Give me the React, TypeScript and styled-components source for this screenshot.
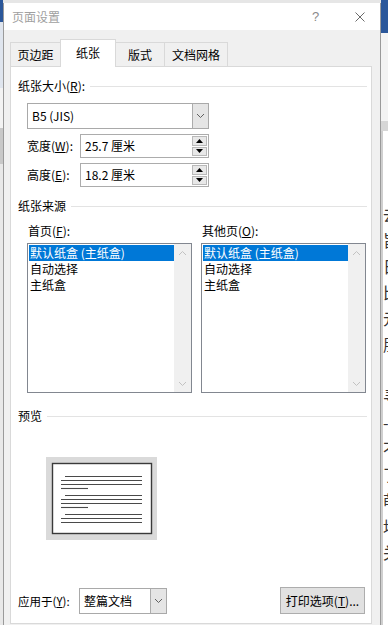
import React from "react";
import styled, { createGlobalStyle } from "styled-components";

const Global = createGlobalStyle`
  html, body { margin: 0; padding: 0; overflow: hidden; background: #ffffff; }
  body {
    font-family: "Noto Sans CJK SC", "Microsoft YaHei", "Noto Sans", sans-serif;
    font-size: 12px;
    color: #000;
  }
  * { box-sizing: border-box; }
`;

const Screen = styled.div`
  width: 388px;
  height: 625px;
  display: flex;
  overflow: hidden;
  background: #e6e6e6;
`;

const LeftStrip = styled.div`
  width: 3px;
  display: flex;
  flex-direction: column;
  flex-shrink: 0;
`;

const StripBlock = styled.div<{ $h?: number; $bg: string }>`
  height: ${(p) => (p.$h ? `${p.$h}px` : "auto")};
  flex: ${(p) => (p.$h ? "none" : "1")};
  background: ${(p) => p.$bg};
`;

const RightStrip = styled.div`
  width: 7px;
  display: flex;
  flex-direction: column;
  flex-shrink: 0;
  overflow: hidden;
`;

const DocArea = styled.div`
  flex: 1;
  background: #ffffff;
  border-left: 2px solid #cfcfcf;
  padding-top: 70px;
  overflow: hidden;
`;

const DocChar = styled.div`
  font-size: 16px;
  line-height: 26px;
  color: #333;
  white-space: nowrap;
`;

const Dialog = styled.div`
  width: 378px;
  height: 622px;
  margin-top: 3px;
  flex-shrink: 0;
  background: #f0f0f0;
  border-left: 1px solid #9a9a9a;
  border-right: 1px solid #9a9a9a;
  display: flex;
  flex-direction: column;
`;

const TitleBar = styled.div`
  height: 27px;
  background: #ffffff;
  display: flex;
  align-items: center;
  padding-left: 8px;
  flex-shrink: 0;
`;

const TitleText = styled.span`
  color: #a0a0a0;
  font-size: 12px;
  line-height: 16px;
`;

const HelpMark = styled.span`
  margin-left: auto;
  width: 10px;
  color: #8a8a8a;
  font-family: "Liberation Sans", sans-serif;
  font-size: 13px;
  line-height: 16px;
`;

const CloseBox = styled.span`
  margin-left: 33px;
  margin-right: 15px;
  width: 10px;
  height: 10px;
  display: flex;
`;

const Body = styled.div`
  flex: 1;
  display: flex;
  flex-direction: column;
  padding: 9px 8px 0 6px;
`;

const TabStrip = styled.div`
  height: 27px;
  display: flex;
  align-items: flex-start;
  position: relative;
  z-index: 2;
`;

const Tab = styled.div<{ $w: number; $active?: boolean }>`
  width: ${(p) => p.$w}px;
  height: ${(p) => (p.$active ? 28 : 24)}px;
  margin-top: ${(p) => (p.$active ? 0 : 3)}px;
  margin-right: -1px;
  background: ${(p) => (p.$active ? "#ffffff" : "#f0f0f0")};
  border: 1px solid #d9d9d9;
  border-bottom: none;
  position: relative;
  z-index: ${(p) => (p.$active ? 2 : 1)};
  display: flex;
  align-items: center;
  justify-content: center;
  font-size: 12px;
  line-height: 16px;
  padding-bottom: ${(p) => (p.$active ? 2 : 0)}px;
`;

const Panel = styled.div`
  height: 558px;
  background: #ffffff;
  border: 1px solid #d9d9d9;
  padding: 11px 4px 9px 7px;
  display: flex;
  flex-direction: column;
`;

const SectionHeader = styled.div<{ $mt?: number }>`
  height: 16px;
  margin-top: ${(p) => p.$mt ?? 0}px;
  display: flex;
  align-items: center;
  line-height: 16px;
  white-space: nowrap;
`;

const SectionLine = styled.div`
  flex: 1;
  height: 1px;
  background: #e3e3e3;
  margin-left: 5px;
`;

const Key = styled.span`
  text-decoration: underline;
  text-underline-offset: 1px;
`;

const Combo = styled.div<{ $w: number; $mt?: number; $ml?: number }>`
  width: ${(p) => p.$w}px;
  height: 26px;
  margin-top: ${(p) => p.$mt ?? 0}px;
  margin-left: ${(p) => p.$ml ?? 0}px;
  border: 1px solid #a9a9a9;
  background: #ffffff;
  display: flex;
  align-items: stretch;
  flex-shrink: 0;
`;

const ComboText = styled.div`
  flex: 1;
  display: flex;
  align-items: center;
  padding-left: 4px;
  line-height: 16px;
  white-space: nowrap;
`;

const ComboButton = styled.div`
  width: 16px;
  background: #e5e5e5;
  border-left: 1px solid #acacac;
  display: flex;
  align-items: center;
  justify-content: center;
`;

const FieldRow = styled.div<{ $mt?: number }>`
  height: 24px;
  margin-top: ${(p) => p.$mt ?? 0}px;
  margin-left: 9px;
  display: flex;
  align-items: center;
`;

const FieldLabel = styled.div`
  width: 53px;
  line-height: 16px;
  white-space: nowrap;
`;

const Spin = styled.div`
  width: 129px;
  height: 24px;
  border: 1px solid #acacac;
  background: #ffffff;
  display: flex;
  align-items: stretch;
`;

const SpinText = styled.div`
  flex: 1;
  display: flex;
  align-items: center;
  padding-left: 4px;
  line-height: 16px;
`;

const SpinButtons = styled.div`
  width: 16px;
  padding: 1px 1px 1px 0;
  display: flex;
  flex-direction: column;
  gap: 1px;
`;

const SpinBtn = styled.div`
  flex: 1;
  background: #e8e8e8;
  border: 1px solid #b9b9b9;
  display: flex;
  align-items: center;
  justify-content: center;
`;

const Columns = styled.div`
  margin-top: 9px;
  margin-left: 9px;
  display: grid;
  grid-template-columns: 165px 165px;
  column-gap: 9px;
`;

const Column = styled.div`
  display: flex;
  flex-direction: column;
`;

const ColLabel = styled.div`
  height: 16px;
  line-height: 16px;
  padding-left: 1px;
`;

const ListBox = styled.div`
  margin-top: 4px;
  height: 150px;
  border: 1px solid #828790;
  background: #ffffff;
  display: flex;
  padding: 1px 0 0 1px;
`;

const ListItems = styled.div`
  flex: 1;
  display: flex;
  flex-direction: column;
`;

const ListItem = styled.div<{ $selected?: boolean }>`
  height: 16px;
  line-height: 16px;
  padding-left: 1px;
  white-space: nowrap;
  background: ${(p) => (p.$selected ? "#0078d7" : "transparent")};
  color: ${(p) => (p.$selected ? "#ffffff" : "#000000")};
`;

const ScrollBar = styled.div`
  width: 17px;
  margin-top: -1px;
  background: #f0f0f0;
  display: flex;
  flex-direction: column;
  justify-content: space-between;
  align-items: center;
  padding: 6px 0 5px;
`;

const PreviewBox = styled.div`
  margin-top: 33px;
  margin-left: 28px;
  width: 111px;
  height: 83px;
  flex-shrink: 0;
`;

const BottomRow = styled.div`
  margin-top: auto;
  height: 27px;
  display: flex;
  align-items: center;
`;

const BottomLabel = styled.div`
  width: 61px;
  line-height: 16px;
  white-space: nowrap;
  font-size: 11.5px;
`;

const PushButton = styled.div`
  margin-left: auto;
  margin-right: 2px;
  width: 85px;
  height: 27px;
  background: #e1e1e1;
  border: 1px solid #adadad;
  display: flex;
  align-items: center;
  justify-content: center;
  line-height: 16px;
  white-space: nowrap;
`;

const Chevron = ({ dir = "down", color = "#606060" }: { dir?: "down" | "up"; color?: string }) => (
  <svg width="9" height="6" viewBox="0 0 9 6">
    <polyline
      points={dir === "down" ? "1,1 4.5,4.5 8,1" : "1,5 4.5,1.5 8,5"}
      fill="none"
      stroke={color}
      strokeWidth="1"
    />
  </svg>
);

const Tri = ({ up }: { up?: boolean }) => (
  <svg width="7" height="4" viewBox="0 0 7 4">
    <polygon points={up ? "0,4 3.5,0 7,4" : "0,0 7,0 3.5,4"} fill="#000" />
  </svg>
);

const CloseIcon = () => (
  <svg width="10" height="10" viewBox="0 0 10 10">
    <line x1="0.5" y1="0.5" x2="9.5" y2="9.5" stroke="#6a6a6a" strokeWidth="1" />
    <line x1="9.5" y1="0.5" x2="0.5" y2="9.5" stroke="#6a6a6a" strokeWidth="1" />
  </svg>
);

const PagePreview = () => {
  const lines: Array<[number, number, number]> = [
    [19, 96, 19], [15, 96, 23], [15, 96, 27], [15, 42, 31],
    [19, 96, 38], [15, 96, 42], [15, 96, 46], [15, 42, 50],
    [19, 96, 57], [15, 96, 61], [15, 96, 65],
  ];
  return (
    <svg width="111" height="83" viewBox="0 0 111 83">
      <rect x="0" y="0" width="111" height="83" fill="#dadada" />
      <rect x="6.5" y="6.5" width="99" height="70" fill="#ffffff" stroke="#3a3a3a" strokeWidth="1.4" />
      {lines.map(([x1, x2, y], i) => (
        <line key={i} x1={x1} x2={x2} y1={y + 0.5} y2={y + 0.5} stroke="#4a4a4a" strokeWidth="1.1" />
      ))}
    </svg>
  );
};

const trays = ["默认纸盒 (主纸盒)", "自动选择", "主纸盒"];

const TrayList = () => (
  <ListBox>
    <ListItems>
      {trays.map((t, i) => (
        <ListItem key={t} $selected={i === 0}>
          {t}
        </ListItem>
      ))}
    </ListItems>
    <ScrollBar>
      <Chevron dir="up" color="#c2c2c2" />
      <Chevron dir="down" color="#c2c2c2" />
    </ScrollBar>
  </ListBox>
);

const docChars = ["去", "旨", "日", "比", "元", "朋", "", "寻", "-", "不", "了", "萌", "均", "关"];

export default function App() {
  return (
    <>
      <Global />
      <Screen>
        <LeftStrip>
          <StripBlock $h={22} $bg="#2b579a" />
          <StripBlock $h={66} $bg="#dfe5ee" />
          <StripBlock $h={40} $bg="#f3f3f3" />
          <StripBlock $h={36} $bg="#c8c8c8" />
          <StripBlock $bg="#e8e8e8" />
        </LeftStrip>

        <Dialog>
          <TitleBar>
            <TitleText>页面设置</TitleText>
            <HelpMark>?</HelpMark>
            <CloseBox>
              <CloseIcon />
            </CloseBox>
          </TitleBar>

          <Body>
            <TabStrip>
              <Tab $w={51}>页边距</Tab>
              <Tab $w={56} $active>纸张</Tab>
              <Tab $w={50}>版式</Tab>
              <Tab $w={64}>文档网格</Tab>
            </TabStrip>

            <Panel>
              <SectionHeader>
                <span>
                  纸张大小(<Key>R</Key>):
                </span>
                <SectionLine />
              </SectionHeader>

              <Combo $w={182} $mt={9} $ml={9}>
                <ComboText>B5 (JIS)</ComboText>
                <ComboButton>
                  <Chevron />
                </ComboButton>
              </Combo>

              <FieldRow $mt={5}>
                <FieldLabel>
                  宽度(<Key>W</Key>):
                </FieldLabel>
                <Spin>
                  <SpinText>25.7 厘米</SpinText>
                  <SpinButtons>
                    <SpinBtn><Tri up /></SpinBtn>
                    <SpinBtn><Tri /></SpinBtn>
                  </SpinButtons>
                </Spin>
              </FieldRow>

              <FieldRow $mt={5}>
                <FieldLabel>
                  高度(<Key>E</Key>):
                </FieldLabel>
                <Spin>
                  <SpinText>18.2 厘米</SpinText>
                  <SpinButtons>
                    <SpinBtn><Tri up /></SpinBtn>
                    <SpinBtn><Tri /></SpinBtn>
                  </SpinButtons>
                </Spin>
              </FieldRow>

              <SectionHeader $mt={11}>
                <span>纸张来源</span>
                <SectionLine />
              </SectionHeader>

              <Columns>
                <Column>
                  <ColLabel>
                    首页(<Key>F</Key>):
                  </ColLabel>
                  <TrayList />
                </Column>
                <Column>
                  <ColLabel>
                    其他页(<Key>O</Key>):
                  </ColLabel>
                  <TrayList />
                </Column>
              </Columns>

              <SectionHeader $mt={15}>
                <span>预览</span>
                <SectionLine />
              </SectionHeader>

              <PreviewBox>
                <PagePreview />
              </PreviewBox>

              <BottomRow>
                <BottomLabel>
                  应用于(<Key>Y</Key>):
                </BottomLabel>
                <Combo $w={88}>
                  <ComboText>整篇文档</ComboText>
                  <ComboButton>
                    <Chevron />
                  </ComboButton>
                </Combo>
                <PushButton>
                  打印选项(<Key>T</Key>)...
                </PushButton>
              </BottomRow>
            </Panel>
          </Body>
        </Dialog>

        <RightStrip>
          <StripBlock $h={33} $bg="#2b579a" />
          <StripBlock $h={88} $bg="#f3f3f3" />
          <StripBlock $h={10} $bg="#d6d6d6" />
          <DocArea>
            {docChars.map((c, i) => (
              <DocChar key={i}>{c || "\u00a0"}</DocChar>
            ))}
          </DocArea>
        </RightStrip>
      </Screen>
    </>
  );
}
